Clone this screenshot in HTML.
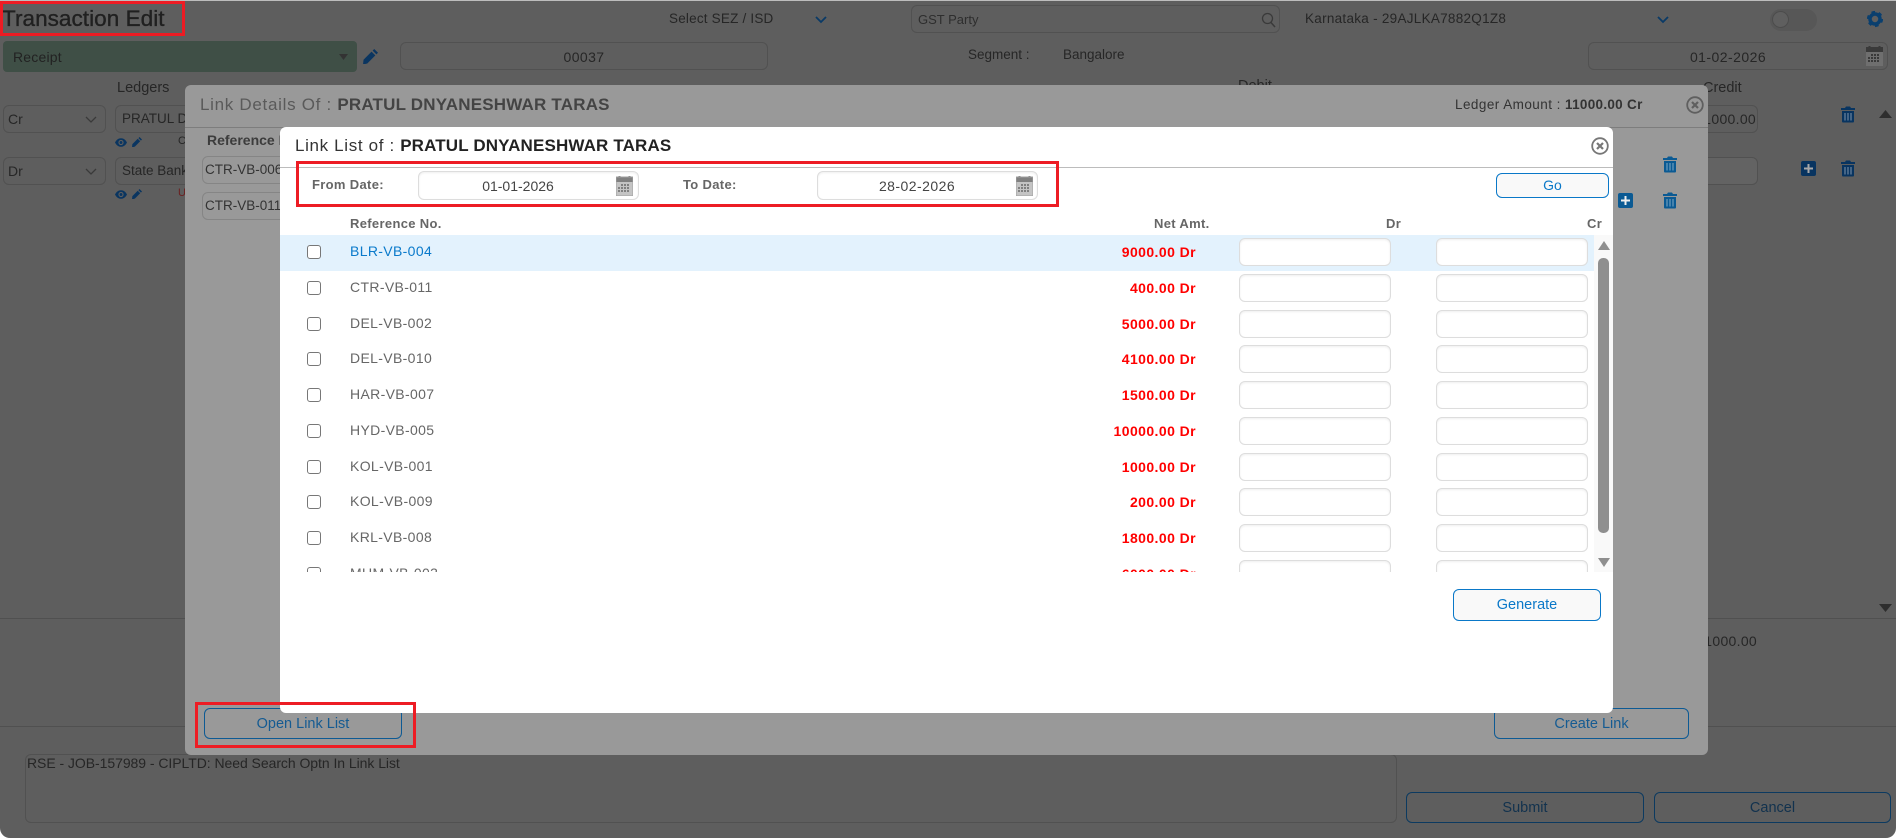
<!DOCTYPE html>
<html><head><meta charset="utf-8"><style>
html,body{margin:0;padding:0;width:1896px;height:838px;overflow:hidden;background:#fff}
*{box-sizing:border-box}
body{font-family:"Liberation Sans",sans-serif;font-size:14px;position:relative}
div,svg{position:absolute}
.t{white-space:nowrap;line-height:16px}
.pg{color:#262626}
.box{border:1px solid #515151;border-radius:6px}
.mbox{border:1px solid #858585;border-radius:6px}
.wbox{border:1px solid #ddd;border-radius:6px;background:#fff;box-shadow:inset 0 1px 2px rgba(0,0,0,.07)}
.row{left:0;width:1314px;height:36px}
.cb{left:27px;top:10px;width:14px;height:14px;border:1.5px solid #777;border-radius:3px;background:#fff}
.rf{left:70px;top:8px;font-size:14px;color:#666;letter-spacing:.35px}
.am{left:716px;width:200px;top:9px;text-align:right;font-weight:bold;font-size:14px;color:#f00;letter-spacing:.42px}
.i1{left:959px;top:3px;width:152px;height:28px}
.i2{left:1156px;top:3px;width:152px;height:28px}
.red{border:3px solid #ed1c24}
.btnp{border:1.5px solid #0c3a60;border-radius:6px;color:#12324e;text-align:center;font-size:14.5px;line-height:30px}
.btnm{border:1.5px solid #0d5a94;border-radius:6px;color:#155b92;text-align:center;font-size:14.5px;line-height:31px}
.btnw{border:1.5px solid #0a78c8;border-radius:6px;color:#0a78c8;background:#f9f9f9;text-align:center;font-size:14px}
.hd{font-weight:bold;font-size:13px;color:#666;letter-spacing:.33px}
</style></head><body>
<svg width="0" height="0" style="left:0;top:0"><defs>
<symbol id="tr" viewBox="0 0 14 16"><path fill="currentColor" d="M5 0h4l1 1.500h4V3.500H0V1.500h4zM1 4.500h12V15a1 1 0 0 1-1 1H2a1 1 0 0 1-1-1z"/><path fill="#fff" fill-opacity=".35" d="M3.300 6.500h1.400v7.500H3.300zM6.300 6.500h1.400v7.500H6.300zM9.300 6.500h1.400v7.500H9.300z"/></symbol>
<symbol id="pc" viewBox="0 0 14 14"><path fill="currentColor" d="M10.500 0 14 3.500 12.500 5 9 1.500zM8 2.500 11.500 6 4 13.500 0 14.500 .5 10z"/></symbol>
<symbol id="ey" viewBox="0 0 14 10"><path fill="currentColor" fill-rule="evenodd" d="M7 0c3 0 5.500 2 7 5-1.500 3-4 5-7 5S1.500 8 0 5c1.500-3 4-5 7-5zm0 2a3 3 0 1 0 0 6 3 3 0 0 0 0-6z"/><circle cx="7" cy="5" r="1.700" fill="currentColor"/></symbol>
<symbol id="cal" viewBox="0 0 17 20"><rect x="0" y="1" width="17" height="19" fill="#c4c4c4"/><rect x="0" y="1" width="17" height="5" fill="#808080"/><rect x="2.500" y="0" width="2" height="3" fill="#808080"/><rect x="12.500" y="0" width="2" height="3" fill="#808080"/><path fill="#808080" d="M5 8h2v2H5zM8 8h2v2H8zM11 8h2v2h-2zM2 11h2v2H2zM5 11h2v2H5zM8 11h2v2H8zM11 11h2v2h-2zM2 14h2v2H2zM5 14h2v2H5zM8 14h2v2H8zM11 14h2v2h-2z"/><rect x="0" y="1" width="17" height="19" fill="none" stroke="#a0a0a0"/></symbol>
<symbol id="calp" viewBox="0 0 17 20"><rect x="0" y="1" width="17" height="19" fill="#6f6f6f"/><rect x="0" y="1" width="17" height="5" fill="#3a3a3a"/><rect x="2.500" y="0" width="2" height="3" fill="#3a3a3a"/><rect x="12.500" y="0" width="2" height="3" fill="#3a3a3a"/><path fill="#3a3a3a" d="M5 8h2v2H5zM8 8h2v2H8zM11 8h2v2h-2zM2 11h2v2H2zM5 11h2v2H5zM8 11h2v2H8zM11 11h2v2h-2zM2 14h2v2H2zM5 14h2v2H5zM8 14h2v2H8zM11 14h2v2h-2z"/></symbol>
<symbol id="cl" viewBox="0 0 18 18"><circle cx="9" cy="9" r="7.800" fill="none" stroke="currentColor" stroke-width="1.800"/><path d="M6 6l6 6M12 6l-6 6" stroke="currentColor" stroke-width="2.200" fill="none"/></symbol>
</defs></svg>

<!-- page background -->
<div style="left:0;top:0;width:1896px;height:838px;background:#5e5e5e;border-radius:0 0 10px 10px"></div>
<div style="left:0;top:0;width:1896px;height:1px;background:#bdbdbd"></div>
<div class="t" style="left:2px;top:6px;font-size:22.5px;line-height:26px;color:#202020;letter-spacing:.05px;-webkit-text-stroke:.35px #202020">Transaction Edit</div>
<div class="t pg" style="left:669px;top:11px;font-size:13.500px;letter-spacing:.2px">Select SEZ / ISD</div>
<svg style="left:815px;top:16px" width="12" height="8" viewBox="0 0 12 8"><path d="M1 1l5 5 5-5" fill="none" stroke="#0a3a66" stroke-width="1.800"/></svg>
<div class="box" style="left:911px;top:5px;width:369px;height:28px"></div>
<div class="t" style="left:918px;top:12px;font-size:13px;color:#2e2e2e">GST Party</div>
<svg style="left:1261px;top:12px" width="15" height="16" viewBox="0 0 15 16"><circle cx="6.500" cy="6.500" r="5" fill="none" stroke="#3a3a3a" stroke-width="1.300"/><path d="M10 10.500l4 4.500" stroke="#3a3a3a" stroke-width="1.500"/></svg>
<div class="t pg" style="left:1305px;top:11px;font-size:13.500px;letter-spacing:.28px">Karnataka - 29AJLKA7882Q1Z8</div>
<svg style="left:1657px;top:16px" width="12" height="8" viewBox="0 0 12 8"><path d="M1 1l5 5 5-5" fill="none" stroke="#0a3a66" stroke-width="1.800"/></svg>
<div style="left:1770px;top:9px;width:47px;height:22px;border-radius:11px;background:#575757"></div>
<div style="left:1772px;top:11px;width:17px;height:17px;border-radius:50%;background:#5f5f5f;border:1px solid #4c4c4c"></div>
<svg style="left:1867px;top:10px" width="16" height="18" viewBox="0 0 16 18"><circle cx="8" cy="9" r="5" fill="none" stroke="#0a3f6e" stroke-width="3.500"/><circle cx="8" cy="9" r="6.800" fill="none" stroke="#0a3f6e" stroke-width="2.600" stroke-dasharray="3.500 3.600"/></svg>

<div style="left:3px;top:41px;width:354px;height:31px;background:#3f4f46;border-radius:4px"></div>
<div class="t" style="left:13px;top:49px;font-size:14px;color:#222;letter-spacing:.2px">Receipt</div>
<svg style="left:339px;top:54px" width="9" height="6" viewBox="0 0 9 6"><path d="M0 0h9L4.500 6z" fill="#333"/></svg>
<svg style="left:363px;top:49px;color:#0a3560" width="15" height="15"><use href="#pc"/></svg>
<div class="box" style="left:400px;top:42px;width:368px;height:28px"></div>
<div class="t pg" style="left:400px;width:368px;top:49px;text-align:center;font-size:14px;letter-spacing:.4px">00037</div>
<div class="t pg" style="left:968px;top:47px;font-size:13.500px">Segment :</div>
<div class="t pg" style="left:1063px;top:47px;font-size:13.500px">Bangalore</div>
<div class="box" style="left:1588px;top:42px;width:300px;height:28px"></div>
<div class="t pg" style="left:1588px;width:280px;top:49px;text-align:center;font-size:14px;letter-spacing:.45px">01-02-2026</div>
<svg style="left:1866px;top:46px" width="17" height="20"><use href="#calp"/></svg>

<div class="t pg" style="left:117px;top:80px;font-size:14.500px">Ledgers</div>
<div class="t pg" style="left:1238px;top:78px;font-size:14.500px">Debit</div>
<div class="t pg" style="left:1703px;top:80px;font-size:14.500px">Credit</div>

<div class="box" style="left:3px;top:105px;width:103px;height:28px"></div>
<div class="t pg" style="left:8px;top:111px;font-size:14px">Cr</div>
<svg style="left:85px;top:116px" width="12" height="7" viewBox="0 0 12 7"><path d="M1 1l5 5 5-5" fill="none" stroke="#3a3a3a" stroke-width="1.300"/></svg>
<div class="box" style="left:115px;top:105px;width:90px;height:28px"></div>
<div class="t pg" style="left:122px;top:111px;font-size:13.500px">PRATUL DNYA</div>
<svg style="left:115px;top:138px;color:#0a3560" width="12" height="9"><use href="#ey"/></svg>
<svg style="left:132px;top:137px;color:#0a3560" width="10" height="10"><use href="#pc"/></svg>
<div class="t pg" style="left:178px;top:133px;font-size:11px">C</div>

<div class="box" style="left:3px;top:157px;width:103px;height:28px"></div>
<div class="t pg" style="left:8px;top:163px;font-size:14px">Dr</div>
<svg style="left:85px;top:168px" width="12" height="7" viewBox="0 0 12 7"><path d="M1 1l5 5 5-5" fill="none" stroke="#3a3a3a" stroke-width="1.300"/></svg>
<div class="box" style="left:115px;top:157px;width:90px;height:28px"></div>
<div class="t pg" style="left:122px;top:163px;font-size:13.500px">State Bank of</div>
<svg style="left:115px;top:190px;color:#0a3560" width="12" height="9"><use href="#ey"/></svg>
<svg style="left:132px;top:189px;color:#0a3560" width="10" height="10"><use href="#pc"/></svg>
<div class="t" style="left:178px;top:185px;font-size:11px;color:#6b2020">U</div>

<div class="box" style="left:1600px;top:105px;width:158px;height:28px"></div>
<div class="t pg" style="left:1600px;width:156px;top:111px;text-align:right;font-size:14px;letter-spacing:.3px">11000.00</div>
<div class="box" style="left:1600px;top:157px;width:158px;height:28px;background:#636363"></div>
<svg style="left:1841px;top:106px;color:#083460" width="14" height="17"><use href="#tr"/></svg>
<svg style="left:1841px;top:160px;color:#083460" width="14" height="17"><use href="#tr"/></svg>
<svg style="left:1879px;top:110px" width="13" height="8" viewBox="0 0 13 8"><path d="M6.500 0L13 8H0z" fill="#2e2e2e"/></svg>
<svg style="left:1801px;top:161px" width="15" height="15" viewBox="0 0 15 15"><rect width="15" height="15" rx="2" fill="#083460"/><path d="M3 6.500h9v2H3zM6.500 3h2v9h-2z" fill="#a8a8a8"/></svg>
<svg style="left:1879px;top:604px" width="13" height="8" viewBox="0 0 13 8"><path d="M0 0h13L6.500 8z" fill="#2e2e2e"/></svg>

<div style="left:0;top:618px;width:1896px;height:1px;background:#505050"></div>
<div style="left:0;top:726px;width:1896px;height:1px;background:#505050"></div>
<div class="t pg" style="left:1660px;width:97px;top:633px;text-align:right;font-size:14px;letter-spacing:.3px">11000.00</div>

<div class="box" style="left:25px;top:754px;width:1372px;height:69px"></div>
<div class="t pg" style="left:27px;top:755px;font-size:14px;letter-spacing:-.05px">RSE - JOB-157989 - CIPLTD: Need Search Optn In Link List</div>
<div class="btnp" style="left:1406px;top:792px;width:238px;height:31px">Submit</div>
<div class="btnp" style="left:1654px;top:792px;width:237px;height:31px">Cancel</div>

<!-- middle modal -->
<div style="left:185px;top:85px;width:1523px;height:670px;background:#999;border-radius:6px"></div>
<div style="left:185px;top:127px;width:1523px;height:1px;background:#7d7d7d"></div>
<div class="t" style="left:200px;top:96px;font-size:17px;line-height:18px;color:#5a5a5a;letter-spacing:.7px">Link Details Of : <b style="color:#444;letter-spacing:.2px">PRATUL DNYANESHWAR TARAS</b></div>
<div class="t" style="left:1455px;top:97px;font-size:13.500px;color:#333;letter-spacing:.45px">Ledger Amount : <b style="letter-spacing:.3px">11000.00 Cr</b></div>
<svg style="left:1686px;top:96px;color:#5f5f5f" width="18" height="18"><use href="#cl"/></svg>
<div class="t" style="left:207px;top:132px;font-weight:bold;font-size:14px;color:#3c3c3c">Reference No</div>
<div class="mbox" style="left:202px;top:156px;width:90px;height:28px"></div>
<div class="t" style="left:205px;top:162px;font-size:13.500px;color:#333">CTR-VB-006</div>
<div class="mbox" style="left:202px;top:192px;width:90px;height:28px"></div>
<div class="t" style="left:205px;top:198px;font-size:13.500px;color:#333">CTR-VB-011</div>
<svg style="left:1663px;top:156px;color:#0b5a93" width="14" height="17"><use href="#tr"/></svg>
<svg style="left:1663px;top:192px;color:#0b5a93" width="14" height="17"><use href="#tr"/></svg>
<svg style="left:1618px;top:193px" width="15" height="15" viewBox="0 0 15 15"><rect width="15" height="15" rx="2" fill="#0b5a93"/><path d="M3 6.500h9v2H3zM6.500 3h2v9h-2z" fill="#eee"/></svg>
<div class="btnm" style="left:204px;top:708px;width:198px;height:31px">Open Link List</div>
<div class="btnm" style="left:1494px;top:708px;width:195px;height:31px">Create Link</div>

<!-- white modal -->
<div style="left:280px;top:127px;width:1333px;height:586px;background:#fff;border-radius:6px"></div>
<div class="t" style="left:295px;top:137px;font-size:17px;line-height:18px;color:#333;letter-spacing:.65px">Link List of : <b style="color:#222;letter-spacing:.15px">PRATUL DNYANESHWAR TARAS</b></div>
<svg style="left:1591px;top:137px;color:#777" width="18" height="18"><use href="#cl"/></svg>
<div style="left:280px;top:167px;width:1333px;height:1px;background:#bcbcbc"></div>
<div class="t hd" style="left:312px;top:177px">From Date:</div>
<div class="wbox" style="left:418px;top:171px;width:221px;height:29px"></div>
<div class="t" style="left:418px;width:200px;top:178px;text-align:center;font-size:14px;color:#444">01-01-2026</div>
<svg style="left:616px;top:176px" width="17" height="20"><use href="#cal"/></svg>
<div class="t hd" style="left:683px;top:177px">To Date:</div>
<div class="wbox" style="left:817px;top:171px;width:221px;height:29px"></div>
<div class="t" style="left:817px;width:200px;top:178px;text-align:center;font-size:14px;color:#444;letter-spacing:.45px">28-02-2026</div>
<svg style="left:1016px;top:176px" width="17" height="20"><use href="#cal"/></svg>
<div class="btnw" style="left:1496px;top:173px;width:113px;height:25px;line-height:22px">Go</div>
<div class="t hd" style="left:350px;top:216px">Reference No.</div>
<div class="t hd" style="left:1154px;top:216px">Net Amt.</div>
<div class="t hd" style="left:1386px;top:216px">Dr</div>
<div class="t hd" style="left:1587px;top:216px">Cr</div>

<div style="left:280px;top:235px;width:1314px;height:337px;overflow:hidden">
<div class="row" style="top:0;background:#e3f2fd"><div class="cb"></div><div class="t rf" style="color:#0a7acb">BLR-VB-004</div><div class="t am">9000.00 Dr</div><div class="wbox i1"></div><div class="wbox i2"></div></div>
<div class="row" style="top:35.75px"><div class="cb"></div><div class="t rf">CTR-VB-011</div><div class="t am">400.00 Dr</div><div class="wbox i1"></div><div class="wbox i2"></div></div>
<div class="row" style="top:71.5px"><div class="cb"></div><div class="t rf">DEL-VB-002</div><div class="t am">5000.00 Dr</div><div class="wbox i1"></div><div class="wbox i2"></div></div>
<div class="row" style="top:107.25px"><div class="cb"></div><div class="t rf">DEL-VB-010</div><div class="t am">4100.00 Dr</div><div class="wbox i1"></div><div class="wbox i2"></div></div>
<div class="row" style="top:143px"><div class="cb"></div><div class="t rf">HAR-VB-007</div><div class="t am">1500.00 Dr</div><div class="wbox i1"></div><div class="wbox i2"></div></div>
<div class="row" style="top:178.75px"><div class="cb"></div><div class="t rf">HYD-VB-005</div><div class="t am">10000.00 Dr</div><div class="wbox i1"></div><div class="wbox i2"></div></div>
<div class="row" style="top:214.5px"><div class="cb"></div><div class="t rf">KOL-VB-001</div><div class="t am">1000.00 Dr</div><div class="wbox i1"></div><div class="wbox i2"></div></div>
<div class="row" style="top:250.25px"><div class="cb"></div><div class="t rf">KOL-VB-009</div><div class="t am">200.00 Dr</div><div class="wbox i1"></div><div class="wbox i2"></div></div>
<div class="row" style="top:286px"><div class="cb"></div><div class="t rf">KRL-VB-008</div><div class="t am">1800.00 Dr</div><div class="wbox i1"></div><div class="wbox i2"></div></div>
<div class="row" style="top:321.75px"><div class="cb"></div><div class="t rf">MUM-VB-003</div><div class="t am">6000.00 Dr</div><div class="wbox i1"></div><div class="wbox i2"></div></div>
</div>
<div style="left:1594px;top:235px;width:19px;height:337px;background:#f9f9f9"></div>
<div style="left:1598px;top:258px;width:11px;height:275px;background:#8f8f8f;border-radius:5px"></div>
<svg style="left:1598px;top:241px" width="12" height="9" viewBox="0 0 12 9"><path d="M6 0l6 9H0z" fill="#8f8f8f"/></svg>
<svg style="left:1598px;top:558px" width="12" height="9" viewBox="0 0 12 9"><path d="M0 0h12L6 9z" fill="#8f8f8f"/></svg>
<div class="btnw" style="left:1453px;top:589px;width:148px;height:32px;line-height:31px;font-size:14.5px">Generate</div>

<!-- red annotations -->
<div class="red" style="left:0;top:1px;width:185px;height:35px"></div>
<div class="red" style="left:296px;top:161px;width:763px;height:46px"></div>
<div class="red" style="left:195px;top:702px;width:221px;height:46px"></div>
</body></html>
